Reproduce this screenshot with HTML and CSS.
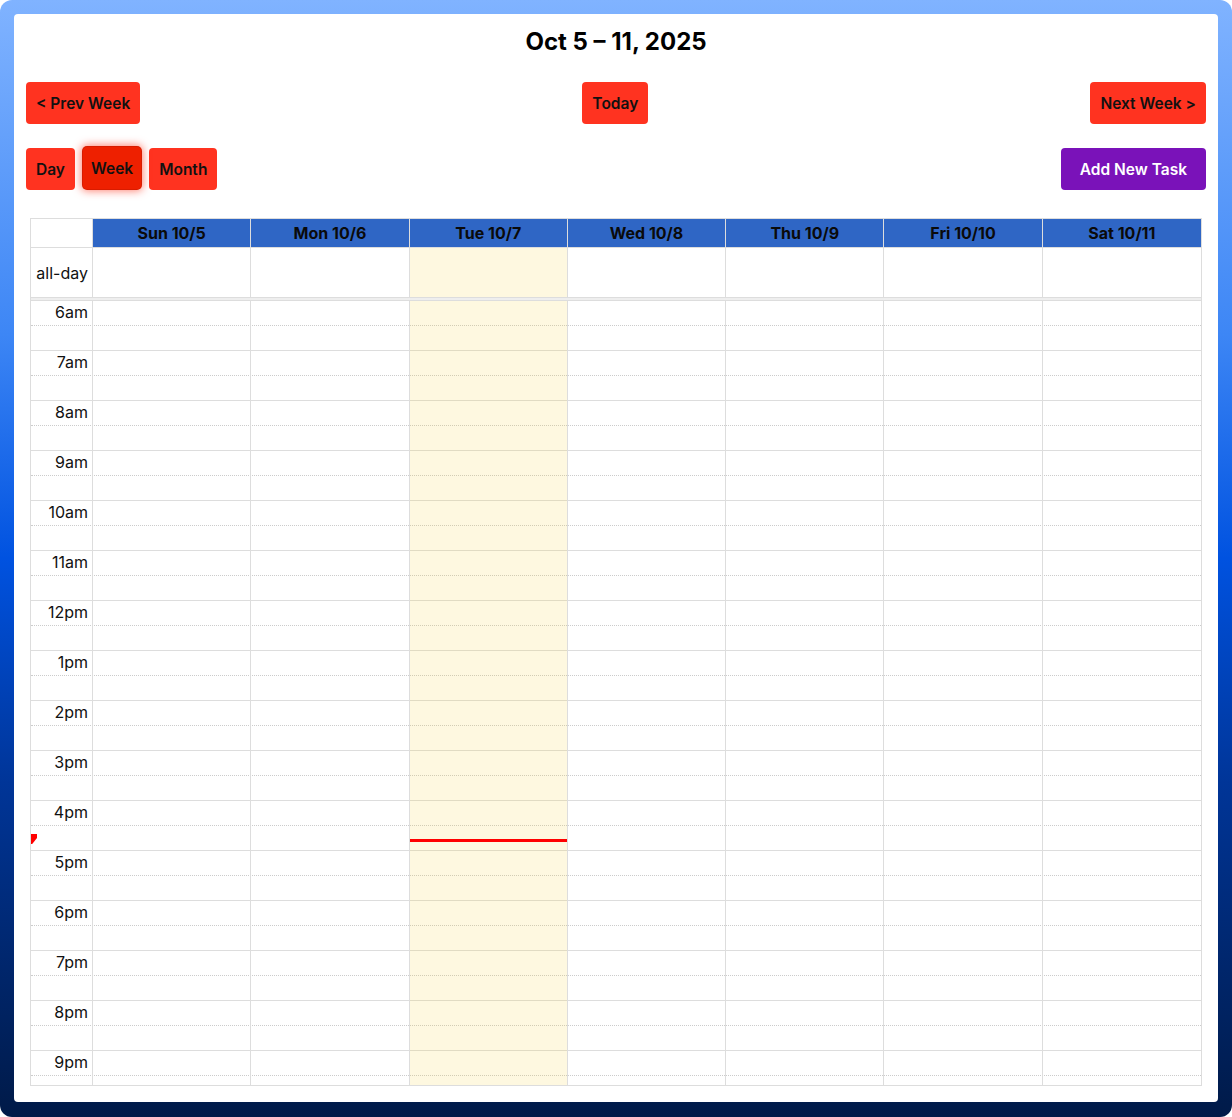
FILE: index.html
```html
<!DOCTYPE html>
<html lang="en">
<head>
<meta charset="utf-8">
<title>Calendar</title>
<link rel="stylesheet" href="styles.css">
</head>
<body>
<div class="card">
  <h1 class="title">Oct 5 – 11, 2025</h1>
  <div class="toolbar">
    <button class="btn">&lt; Prev Week</button>
    <button class="btn">Today</button>
    <button class="btn">Next Week &gt;</button>
  </div>
  <div class="toolbar row2">
    <div class="views">
      <button class="btn">Day</button>
      <button class="btn active">Week</button>
      <button class="btn">Month</button>
    </div>
    <button class="btn purple">Add New Task</button>
  </div>

  <div class="cal">
    <div class="cal-row head">
      <div class="cell axis"></div>
      <div class="cell day">Sun 10/5</div>
      <div class="cell day">Mon 10/6</div>
      <div class="cell day">Tue 10/7</div>
      <div class="cell day">Wed 10/8</div>
      <div class="cell day">Thu 10/9</div>
      <div class="cell day">Fri 10/10</div>
      <div class="cell day">Sat 10/11</div>
    </div>
    <div class="cal-row allday">
      <div class="cell axis label-allday">all-day</div>
      <div class="cell"></div>
      <div class="cell"></div>
      <div class="cell today"></div>
      <div class="cell"></div>
      <div class="cell"></div>
      <div class="cell"></div>
      <div class="cell"></div>
    </div>
    <div class="divider"></div>
    <div class="timegrid">
      <div class="slots">
        <div class="slot half"><span class="lbl">6am</span></div><div class="slot"></div>
        <div class="slot half"><span class="lbl">7am</span></div><div class="slot"></div>
        <div class="slot half"><span class="lbl">8am</span></div><div class="slot"></div>
        <div class="slot half"><span class="lbl">9am</span></div><div class="slot"></div>
        <div class="slot half"><span class="lbl">10am</span></div><div class="slot"></div>
        <div class="slot half"><span class="lbl">11am</span></div><div class="slot"></div>
        <div class="slot half"><span class="lbl">12pm</span></div><div class="slot"></div>
        <div class="slot half"><span class="lbl">1pm</span></div><div class="slot"></div>
        <div class="slot half"><span class="lbl">2pm</span></div><div class="slot"></div>
        <div class="slot half"><span class="lbl">3pm</span></div><div class="slot"></div>
        <div class="slot half"><span class="lbl">4pm</span></div><div class="slot"></div>
        <div class="slot half"><span class="lbl">5pm</span></div><div class="slot"></div>
        <div class="slot half"><span class="lbl">6pm</span></div><div class="slot"></div>
        <div class="slot half"><span class="lbl">7pm</span></div><div class="slot"></div>
        <div class="slot half"><span class="lbl">8pm</span></div><div class="slot"></div>
        <div class="slot half"><span class="lbl">9pm</span></div><div class="slot"></div>
      </div>
      <div class="cols">
        <div class="col axis-col"><div class="now-arrow"></div></div>
        <div class="col"></div>
        <div class="col"></div>
        <div class="col today"><div class="now-line"></div></div>
        <div class="col"></div>
        <div class="col"></div>
        <div class="col"></div>
        <div class="col"></div>
      </div>
    </div>
  </div>
</div>
</body>
</html>
```
FILE: styles.css
```css
html {
  background: #ffffff;
}
body {
  margin: 0;
  height: 1117px;
  box-sizing: border-box;
  padding: 14px 14px 15px;
  border-radius: 12px;
  background: linear-gradient(180deg, #80b3ff 0%, #3d86f5 30%, #0052e0 50%, #003598 70%, #001a48 100%);
  font-family: Inter, "Noto Sans", "Liberation Sans", sans-serif;
  color: #111;
}
.card {
  background: #fff;
  border-radius: 4px;
  height: 1088px;
  box-sizing: border-box;
  padding: 13px 12px 0;
}
.title {
  margin: 0;
  text-align: center;
  font-size: 24px;
  line-height: 30px;
  font-weight: 700;
  color: #000;
}
.toolbar {
  display: flex;
  justify-content: space-between;
  align-items: center;
  margin-top: 25px;
}
.toolbar.row2 {
  margin-top: 24px;
}
.views {
  display: flex;
  gap: 8px;
}
.btn {
  height: 42px;
  padding: 0 10px;
  border: 0;
  border-radius: 4px;
  background: #ff3320;
  color: #111;
  font-family: Inter, "Noto Sans", "Liberation Sans", sans-serif;
  font-size: 15.5px;
  font-weight: 600;
  cursor: pointer;
}
.btn.active {
  background: #ee2000;
  padding: 0 8px;
  transform: translateY(-1px);
  box-shadow: 0 0 0 1px #d81c00, 0 0 8px 2px rgba(255, 30, 0, 0.55);
}
.btn.purple {
  background: #7a12b9;
  color: #fff;
  padding: 0 19px;
}
.cal {
  margin: 28px 4px 0;
  border: 1px solid #ddd;
}
.cal-row {
  display: grid;
  grid-template-columns: 62px repeat(7, 1fr);
}
.cell {
  border-right: 1px solid #ddd;
  border-bottom: 1px solid #ddd;
}
.cell:last-child {
  border-right: 0;
}
.head .cell {
  height: 28px;
  line-height: 29px;
}
.head .day {
  background: #2f66c5;
  text-align: center;
  font-size: 16px;
  font-weight: 700;
  color: #0a0a0a;
}
.allday .cell {
  height: 49px;
  border-bottom: 0;
}
.label-allday {
  display: flex;
  align-items: center;
  justify-content: flex-end;
  padding-right: 4px;
  font-size: 16px;
}
.today {
  background: rgba(250, 210, 60, 0.16);
}
.divider {
  height: 2px;
  background: #eee;
  border-top: 1px solid #ddd;
  border-bottom: 1px solid #ddd;
}
.timegrid {
  position: relative;
  height: 784px;
  overflow: hidden;
}
.slot {
  height: 24px;
  border-bottom: 1px solid #ddd;
}
.slot.half {
  border-bottom: 1px dotted #ccc;
}
.lbl {
  display: block;
  width: 57px;
  text-align: right;
  font-size: 16px;
  line-height: 23px;
}
.cols {
  position: absolute;
  inset: 0;
  display: grid;
  grid-template-columns: 62px repeat(7, 1fr);
}
.col {
  position: relative;
  border-right: 1px solid #ddd;
}
.col:last-child {
  border-right: 0;
}
.now-line {
  position: absolute;
  top: 538px;
  left: 0;
  right: 0;
  height: 3px;
  background: #ff0000;
}
.now-arrow {
  position: absolute;
  top: 533px;
  left: 0;
  width: 6px;
  height: 10px;
  background: #ff0000;
  clip-path: polygon(0 0, 100% 0, 100% 40%, 20% 100%, 0 100%);
}
```
